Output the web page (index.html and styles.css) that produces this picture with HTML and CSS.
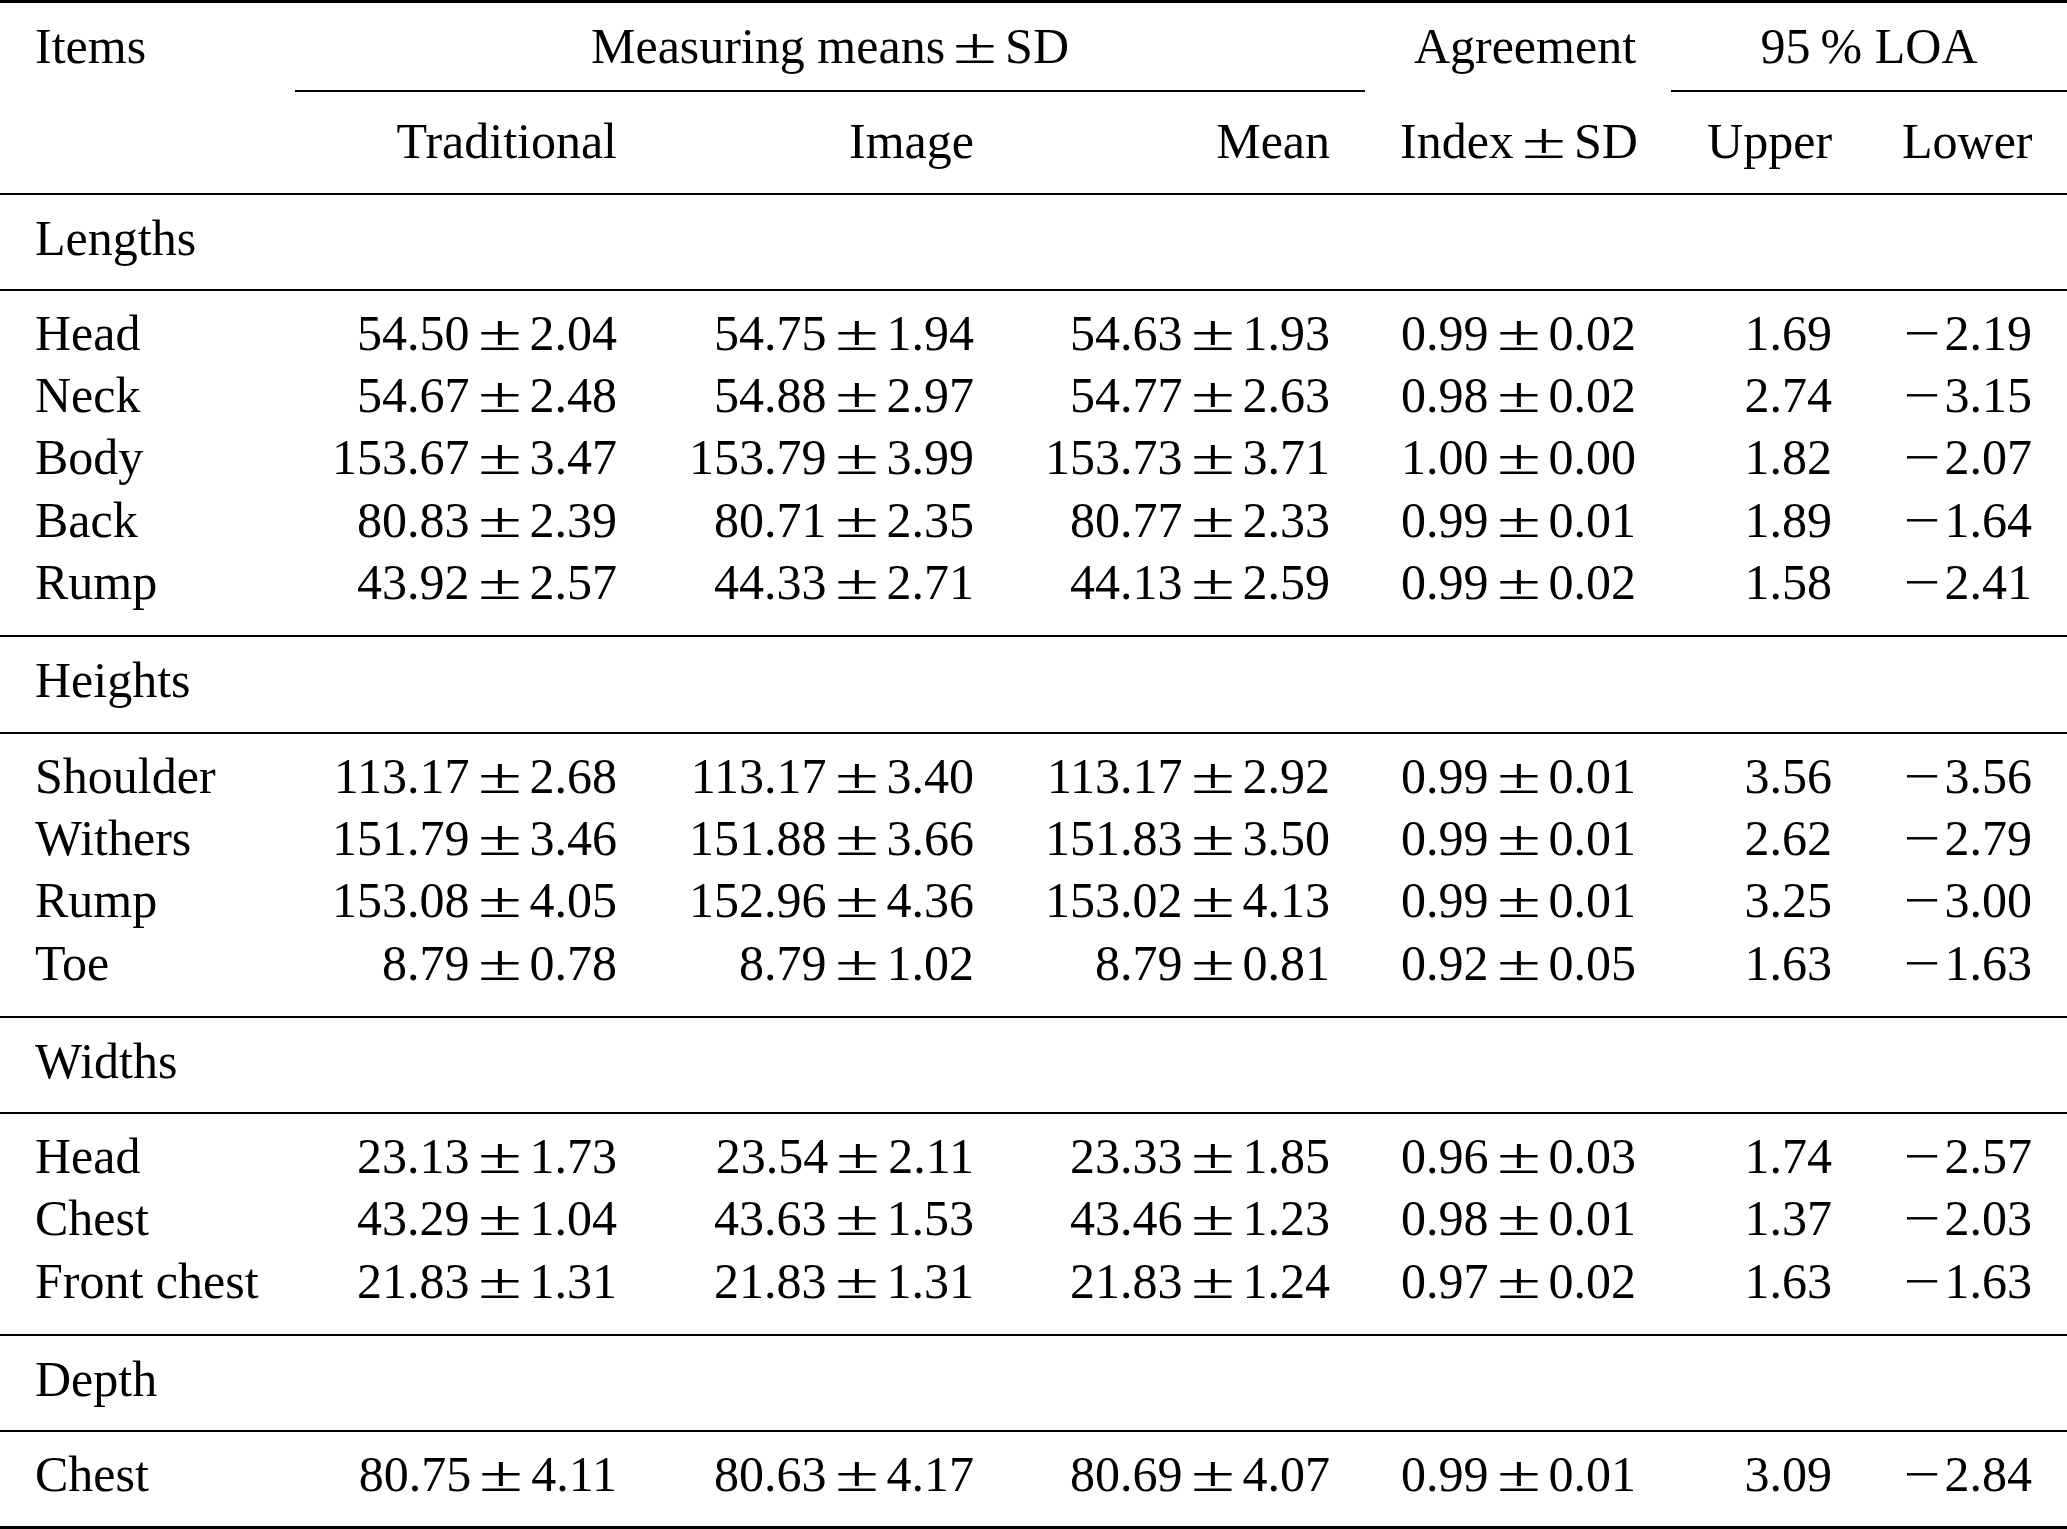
FILE: index.html
```html
<!DOCTYPE html>
<html lang="en">
<head>
<meta charset="utf-8">
<title>Agreement table</title>
<link rel="stylesheet" href="styles.css">
</head>
<body>
<table class="tbl">
  <colgroup>
    <col class="c-item"><col class="c-trad"><col class="c-img"><col class="c-mean"><col class="c-agr"><col class="c-up"><col class="c-low">
  </colgroup>
  <thead>
    <tr class="h1">
      <th class="l">Items</th>
      <th class="ctr rule" colspan="3">Measuring means<span class="pm">±</span>SD</th>
      <th class="r">Agreement</th>
      <th class="ctr rule" colspan="2">95&#8201;% LOA</th>
    </tr>
    <tr class="h2">
      <th class="l"></th>
      <th class="r">Traditional</th>
      <th class="r">Image</th>
      <th class="r">Mean</th>
      <th class="r">Index<span class="pm">±</span>SD</th>
      <th class="r">Upper</th>
      <th class="r">Lower</th>
    </tr>
  </thead>
  <tbody class="sec"><tr><td class="l" colspan="7">Lengths</td></tr></tbody>
  <tbody class="grp">
    <tr><td class="l">Head</td><td class="r">54.50<span class="pm">±</span>2.04</td><td class="r">54.75<span class="pm">±</span>1.94</td><td class="r">54.63<span class="pm">±</span>1.93</td><td class="r">0.99<span class="pm">±</span>0.02</td><td class="r">1.69</td><td class="r"><span class="neg">−</span>2.19</td></tr>
    <tr><td class="l">Neck</td><td class="r">54.67<span class="pm">±</span>2.48</td><td class="r">54.88<span class="pm">±</span>2.97</td><td class="r">54.77<span class="pm">±</span>2.63</td><td class="r">0.98<span class="pm">±</span>0.02</td><td class="r">2.74</td><td class="r"><span class="neg">−</span>3.15</td></tr>
    <tr><td class="l">Body</td><td class="r">153.67<span class="pm">±</span>3.47</td><td class="r">153.79<span class="pm">±</span>3.99</td><td class="r">153.73<span class="pm">±</span>3.71</td><td class="r">1.00<span class="pm">±</span>0.00</td><td class="r">1.82</td><td class="r"><span class="neg">−</span>2.07</td></tr>
    <tr><td class="l">Back</td><td class="r">80.83<span class="pm">±</span>2.39</td><td class="r">80.71<span class="pm">±</span>2.35</td><td class="r">80.77<span class="pm">±</span>2.33</td><td class="r">0.99<span class="pm">±</span>0.01</td><td class="r">1.89</td><td class="r"><span class="neg">−</span>1.64</td></tr>
    <tr><td class="l">Rump</td><td class="r">43.92<span class="pm">±</span>2.57</td><td class="r">44.33<span class="pm">±</span>2.71</td><td class="r">44.13<span class="pm">±</span>2.59</td><td class="r">0.99<span class="pm">±</span>0.02</td><td class="r">1.58</td><td class="r"><span class="neg">−</span>2.41</td></tr>
  </tbody>
  <tbody class="sec"><tr><td class="l" colspan="7">Heights</td></tr></tbody>
  <tbody class="grp">
    <tr><td class="l">Shoulder</td><td class="r">113.17<span class="pm">±</span>2.68</td><td class="r">113.17<span class="pm">±</span>3.40</td><td class="r">113.17<span class="pm">±</span>2.92</td><td class="r">0.99<span class="pm">±</span>0.01</td><td class="r">3.56</td><td class="r"><span class="neg">−</span>3.56</td></tr>
    <tr><td class="l">Withers</td><td class="r">151.79<span class="pm">±</span>3.46</td><td class="r">151.88<span class="pm">±</span>3.66</td><td class="r">151.83<span class="pm">±</span>3.50</td><td class="r">0.99<span class="pm">±</span>0.01</td><td class="r">2.62</td><td class="r"><span class="neg">−</span>2.79</td></tr>
    <tr><td class="l">Rump</td><td class="r">153.08<span class="pm">±</span>4.05</td><td class="r">152.96<span class="pm">±</span>4.36</td><td class="r">153.02<span class="pm">±</span>4.13</td><td class="r">0.99<span class="pm">±</span>0.01</td><td class="r">3.25</td><td class="r"><span class="neg">−</span>3.00</td></tr>
    <tr><td class="l">Toe</td><td class="r">8.79<span class="pm">±</span>0.78</td><td class="r">8.79<span class="pm">±</span>1.02</td><td class="r">8.79<span class="pm">±</span>0.81</td><td class="r">0.92<span class="pm">±</span>0.05</td><td class="r">1.63</td><td class="r"><span class="neg">−</span>1.63</td></tr>
  </tbody>
  <tbody class="sec"><tr><td class="l" colspan="7">Widths</td></tr></tbody>
  <tbody class="grp">
    <tr><td class="l">Head</td><td class="r">23.13<span class="pm">±</span>1.73</td><td class="r">23.54<span class="pm">±</span>2.11</td><td class="r">23.33<span class="pm">±</span>1.85</td><td class="r">0.96<span class="pm">±</span>0.03</td><td class="r">1.74</td><td class="r"><span class="neg">−</span>2.57</td></tr>
    <tr><td class="l">Chest</td><td class="r">43.29<span class="pm">±</span>1.04</td><td class="r">43.63<span class="pm">±</span>1.53</td><td class="r">43.46<span class="pm">±</span>1.23</td><td class="r">0.98<span class="pm">±</span>0.01</td><td class="r">1.37</td><td class="r"><span class="neg">−</span>2.03</td></tr>
    <tr><td class="l">Front chest</td><td class="r">21.83<span class="pm">±</span>1.31</td><td class="r">21.83<span class="pm">±</span>1.31</td><td class="r">21.83<span class="pm">±</span>1.24</td><td class="r">0.97<span class="pm">±</span>0.02</td><td class="r">1.63</td><td class="r"><span class="neg">−</span>1.63</td></tr>
  </tbody>
  <tbody class="sec"><tr><td class="l" colspan="7">Depth</td></tr></tbody>
  <tbody class="grp last">
    <tr><td class="l">Chest</td><td class="r">80.75<span class="pm">±</span>4.11</td><td class="r">80.63<span class="pm">±</span>4.17</td><td class="r">80.69<span class="pm">±</span>4.07</td><td class="r">0.99<span class="pm">±</span>0.01</td><td class="r">3.09</td><td class="r"><span class="neg">−</span>2.84</td></tr>
  </tbody>
</table>
</body>
</html>
```
FILE: styles.css
```css
html, body {
  margin: 0;
  padding: 0;
  background: #ffffff;
}

.tbl {
  width: 2067px;
  table-layout: fixed;
  border-collapse: separate;
  border-spacing: 0;
  font-family: "Liberation Serif", "Times New Roman", serif;
  font-size: 50px;
  line-height: 62.3px;
  color: #000;
}

.c-item { width: 295px; }
.c-trad { width: 357px; }
.c-img  { width: 357px; }
.c-mean { width: 356px; }
.c-agr  { width: 306px; }
.c-up   { width: 196px; }
.c-low  { width: 200px; }

.tbl th, .tbl td {
  font-weight: normal;
  padding: 0 35px;
  vertical-align: baseline;
  white-space: nowrap;
}

.l { text-align: left; }
.r { text-align: right; }
.ctr { text-align: center; }

.pm {
  display: inline-block;
  width: 60px;
  text-align: center;
  transform: scaleX(1.6);
}

.neg {
  display: inline-block;
  width: 36px;
  text-align: left;
  transform: scaleX(1.3);
}

/* header row 1 (toprule above, cmidrules below) */
.h1 th {
  border-top: 3px solid #000;
  border-bottom: 2px solid transparent;
  padding-top: 12px;
  padding-bottom: 13px;
}
.h1 th.rule {
  border-bottom-color: #000;
}

/* header row 2 (midrule below) */
.h2 th {
  padding-top: 18px;
  padding-bottom: 20px;
  border-bottom: 2px solid #000;
}

/* section title rows */
.sec td {
  padding-top: 12px;
  padding-bottom: 20px;
  border-bottom: 2px solid #000;
}

/* data groups */
.grp tr:first-child td { padding-top: 11px; }
.grp tr:last-child td {
  padding-bottom: 22px;
  border-bottom: 2px solid #000;
}
.grp.last tr:last-child td {
  padding-bottom: 20px;
  border-bottom-width: 3px;
}
```
